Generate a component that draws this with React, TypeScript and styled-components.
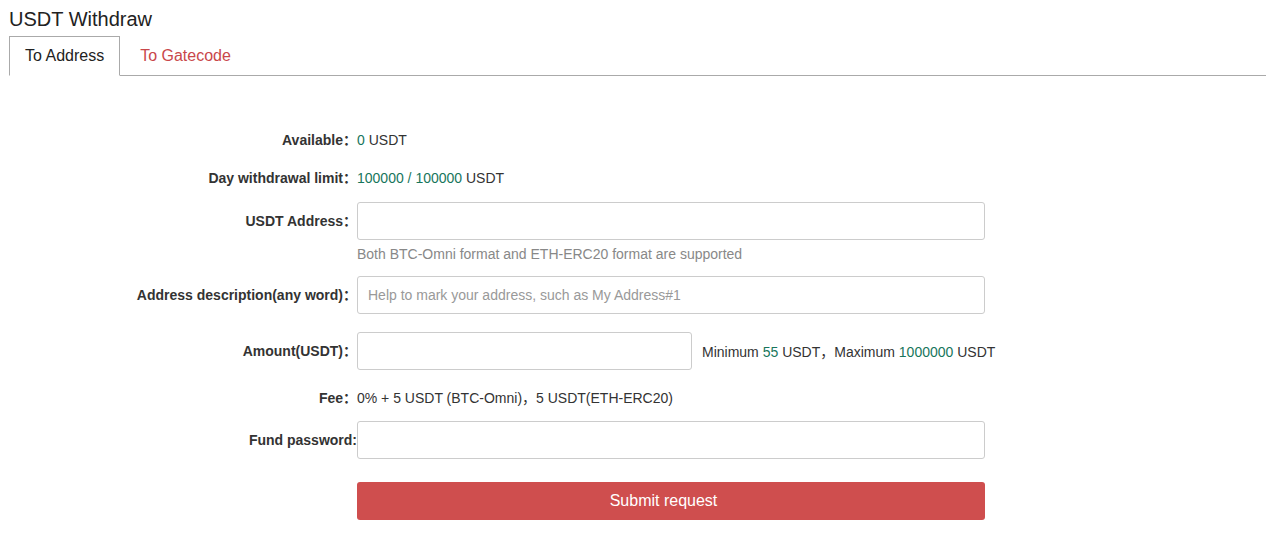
import React from "react";
import styled, { createGlobalStyle } from "styled-components";

const Global = createGlobalStyle`
  html, body { margin: 0; padding: 0; background: #fff; }
  body { font-family: "Liberation Sans", "Noto Sans CJK SC", Arial, sans-serif; color: #333; }
  * { box-sizing: border-box; }
`;

const Page = styled.div`
  padding: 7px 0 0 9px;
`;

const Title = styled.h1`
  margin: 0 0 5px;
  font-size: 20px;
  line-height: 24px;
  font-weight: 400;
  color: #222;
`;

const TabBar = styled.div`
  display: flex;
  border-bottom: 1px solid #aaa;
`;

const Tab = styled.div<{ $active?: boolean }>`
  height: 40px;
  padding: 0 15px;
  margin-bottom: -1px;
  margin-right: 4px;
  line-height: 38px;
  font-size: 16px;
  color: ${(p) => (p.$active ? "#222" : "#c9474a")};
  background: ${(p) => (p.$active ? "#fff" : "transparent")};
  border: 1px solid ${(p) => (p.$active ? "#aaa" : "transparent")};
  border-bottom-color: ${(p) => (p.$active ? "#fff" : "transparent")};
  cursor: pointer;
`;

const Form = styled.div`
  padding-top: 45px;
  display: flex;
  flex-direction: column;
`;

const Row = styled.div<{ $mt?: number; $tall?: boolean }>`
  display: grid;
  grid-template-columns: 348px 628px;
  align-items: ${(p) => (p.$tall ? "start" : "center")};
  margin-top: ${(p) => p.$mt ?? 0}px;
  min-height: 38px;
`;

const Label = styled.label`
  text-align: right;
  font-size: 14px;
  font-weight: 700;
  line-height: 38px;
  color: #333;
  white-space: nowrap;
  font-family: "Liberation Sans", "Noto Sans CJK SC", sans-serif;
`;

const Value = styled.div`
  font-size: 14px;
  line-height: 20px;
  color: #333;
  white-space: nowrap;
`;

const Green = styled.span`
  color: #17765c;
`;

const Control = styled.div`
  display: flex;
  flex-direction: column;
`;

const Input = styled.input<{ $w?: number }>`
  width: ${(p) => (p.$w ? `${p.$w}px` : "100%")};
  flex-shrink: 0;
  height: 38px;
  border: 1px solid #ccc;
  border-radius: 3px;
  padding: 0 10px;
  font-size: 14px;
  font-family: "Liberation Sans", Arial, sans-serif;
  color: #333;
  outline: none;
  &::placeholder { color: #999; }
`;

const Hint = styled.div`
  margin-top: 4px;
  font-size: 14px;
  line-height: 20px;
  color: #888;
`;

const Inline = styled.div`
  display: flex;
  align-items: center;
  gap: 10px;
`;

const Note = styled.span`
  font-size: 14px;
  color: #333;
  white-space: nowrap;
`;

const Submit = styled.button`
  height: 38px;
  width: 100%;
  padding: 0 15px 0 0;
  border: none;
  border-radius: 3px;
  background: #cf4e4e;
  color: #fff;
  font-size: 16px;
  font-family: "Liberation Sans", Arial, sans-serif;
  cursor: pointer;
`;

export default function App() {
  return (
    <Page>
      <Global />
      <Title>USDT Withdraw</Title>
      <TabBar>
        <Tab $active>To Address</Tab>
        <Tab>To Gatecode</Tab>
      </TabBar>
      <Form>
        <Row>
          <Label>Available：</Label>
          <Value>
            <Green>0</Green> USDT
          </Value>
        </Row>
        <Row>
          <Label>Day withdrawal limit：</Label>
          <Value>
            <Green>100000 / 100000</Green> USDT
          </Value>
        </Row>
        <Row $mt={5} $tall>
          <Label>USDT Address：</Label>
          <Control>
            <Input />
            <Hint>Both BTC-Omni format and ETH-ERC20 format are supported</Hint>
          </Control>
        </Row>
        <Row $mt={12}>
          <Label>Address description(any word)：</Label>
          <Input placeholder="Help to mark your address, such as My Address#1" />
        </Row>
        <Row $mt={18}>
          <Label>Amount(USDT)：</Label>
          <Inline>
            <Input $w={335} />
            <Note>
              Minimum <Green>55</Green> USDT，Maximum <Green>1000000</Green> USDT
            </Note>
          </Inline>
        </Row>
        <Row $mt={9}>
          <Label>Fee：</Label>
          <Value>0% + 5 USDT (BTC-Omni)，5 USDT(ETH-ERC20)</Value>
        </Row>
        <Row $mt={4}>
          <Label>Fund password:</Label>
          <Input type="password" />
        </Row>
        <Row $mt={23}>
          <span />
          <Submit>Submit request</Submit>
        </Row>
      </Form>
    </Page>
  );
}
